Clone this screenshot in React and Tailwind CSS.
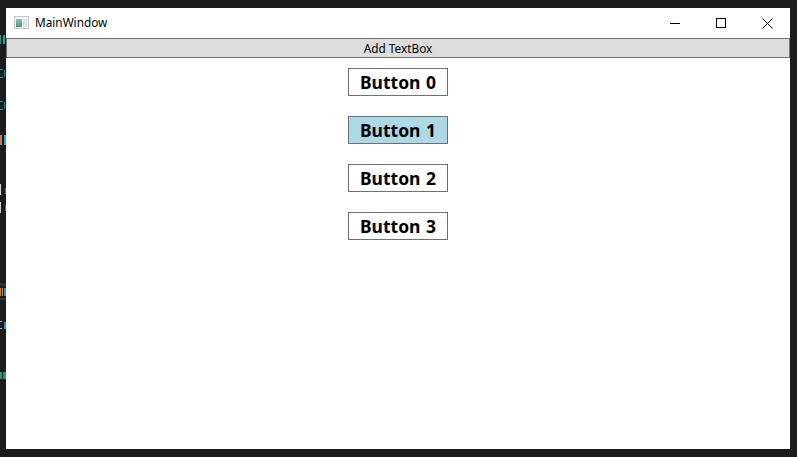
import React from "react";

// bits of the code editor that stick out left of the window
const fragments = [
  { top: 35, left: 0, width: 1, height: 9, color: "bg-[#1f9d8f]" },
  { top: 35, left: 3, width: 2, height: 9, color: "bg-[#1f9d8f]" },
  { top: 69, left: 0, width: 3, height: 1, color: "bg-[#1f9d8f]" },
  { top: 77, left: 0, width: 3, height: 1, color: "bg-[#1f9d8f]" },
  { top: 70, left: 4, width: 1, height: 7, color: "bg-[#1b7f8f]" },
  { top: 101, left: 0, width: 3, height: 1, color: "bg-[#1f9d8f]" },
  { top: 109, left: 0, width: 3, height: 1, color: "bg-[#1f9d8f]" },
  { top: 102, left: 4, width: 1, height: 7, color: "bg-[#1b7f8f]" },
  { top: 135, left: 0, width: 2, height: 10, color: "bg-[#c77a55]" },
  { top: 135, left: 4, width: 2, height: 10, color: "bg-[#2aa8d8]" },
  { top: 184, left: 0, width: 1, height: 11, color: "bg-[#d8d8d8]" },
  { top: 202, left: 0, width: 1, height: 11, color: "bg-[#d8c8c8]" },
  { top: 188, left: 5, width: 1, height: 6, color: "bg-[#666666]" },
  { top: 205, left: 5, width: 1, height: 6, color: "bg-[#4f6f6a]" },
  { top: 283, left: 0, width: 6, height: 3, color: "bg-[#333333]" },
  { top: 298, left: 0, width: 6, height: 2, color: "bg-[#333333]" },
  { top: 288, left: 0, width: 1, height: 8, color: "bg-[#d18b1f]" },
  { top: 288, left: 2, width: 1, height: 8, color: "bg-[#d18b1f]" },
  { top: 288, left: 4, width: 2, height: 8, color: "bg-[#2a8fd0]" },
  { top: 321, left: 0, width: 2, height: 1, color: "bg-[#c9b79a]" },
  { top: 328, left: 0, width: 2, height: 1, color: "bg-[#c9b79a]" },
  { top: 322, left: 4, width: 2, height: 7, color: "bg-[#2a8fd0]" },
  { top: 372, left: 0, width: 2, height: 7, color: "bg-[#2f9a5a]" },
  { top: 372, left: 3, width: 3, height: 7, color: "bg-[#1b8fa8]" },
];

const WindowIcon = () => (
  <svg width="16" height="16" viewBox="0 0 16 16" className="shrink-0">
    <defs>
      <linearGradient id="pane" x1="0" y1="0" x2="0" y2="1">
        <stop offset="0" stopColor="#8fbcc4" />
        <stop offset="1" stopColor="#4f9a72" />
      </linearGradient>
    </defs>
    <rect x="0.5" y="1.5" width="14" height="12" fill="#f2f4f5" stroke="#c3c7ca" />
    <rect x="2" y="4" width="6" height="8" fill="url(#pane)" />
    <rect x="9" y="4" width="4" height="8" fill="#dde6e8" />
  </svg>
);

const TitleButtons = () => (
  <div className="flex h-full">
    <button className="flex h-full w-[46px] items-center justify-center">
      <svg width="10" height="10" viewBox="0 0 10 10">
        <path d="M0 5.5H10" stroke="#000" />
      </svg>
    </button>
    <button className="flex h-full w-[46px] items-center justify-center">
      <svg width="10" height="10" viewBox="0 0 10 10">
        <rect x="0.5" y="0.5" width="9" height="9" fill="none" stroke="#000" />
      </svg>
    </button>
    <button className="flex h-full w-[46px] items-center justify-center">
      <svg width="11" height="11" viewBox="0 0 11 11">
        <path d="M0.5 0.5L10.5 10.5M10.5 0.5L0.5 10.5" stroke="#000" />
      </svg>
    </button>
  </div>
);

const App = () => {
  const buttons = ["Button 0", "Button 1", "Button 2", "Button 3"];

  return (
    <div className="relative flex h-[457px] w-[797px] flex-col overflow-hidden bg-[#1c1c1c] pt-[8px] pr-[7px] pb-[8px] pl-[6px] font-['Noto_Sans',sans-serif]">
      {fragments.map((f) => (
        <div
          key={`${f.top}-${f.left}`}
          className={`absolute ${f.color}`}
          style={{ top: f.top, left: f.left, width: f.width, height: f.height }}
        />
      ))}

      <div className="flex flex-1 flex-col bg-white">
        <div className="flex h-[30px] items-center justify-between">
          <div className="flex items-center gap-[5px] pl-[8px] text-[11.8px] text-black">
            <WindowIcon />
            <span>MainWindow</span>
          </div>
          <TitleButtons />
        </div>

        <button className="flex h-[20px] items-center justify-center border border-[#707070] bg-[#dddddd] pt-[1px] text-[11.8px] text-black">
          Add TextBox
        </button>

        <div className="flex flex-col items-center gap-[20px] pt-[10px]">
          {buttons.map((label, i) => (
            <button
              key={label}
              className={`flex h-[28px] w-[100px] items-center justify-center border border-[#707070] pt-[1px] text-[17.5px] font-bold text-black [word-spacing:1px] ${
                i === 1 ? "bg-[#add8e6]" : "bg-white"
              }`}
            >
              {label}
            </button>
          ))}
        </div>
      </div>
    </div>
  );
};

export default App;
